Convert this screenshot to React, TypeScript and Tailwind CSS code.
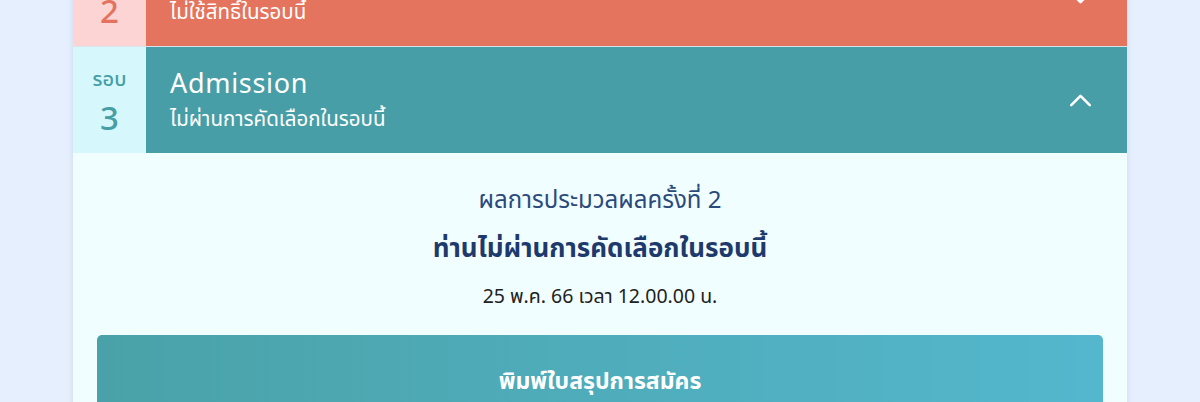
import { ChevronDown, ChevronUp } from 'lucide-react'

const font = { fontFamily: '"Noto Sans Thai", "Noto Sans", "Noto Sans CJK SC", sans-serif' }

type Round = {
  no: number
  title: string
  status: string
  open: boolean
  cell: string
  num: string
  head: string
}

const rounds: Round[] = [
  { no: 2, title: 'Quota', status: 'ไม่ใช้สิทธิ์ในรอบนี้', open: false, cell: 'bg-[#fbd4d3]', num: 'text-[#e3735d]', head: 'bg-[#e4745d]' },
  { no: 3, title: 'Admission', status: 'ไม่ผ่านการคัดเลือกในรอบนี้', open: true, cell: 'bg-[#d6f8fc]', num: 'text-[#479ea5]', head: 'bg-[#489ea6]' },
]

function RoundHeader({ r }: { r: Round }) {
  return (
    <div className={`flex ${r.open ? 'h-[106px]' : 'h-[107px] border-b border-[#d9e4ea]'}`}>
      <div className={`w-[73px] shrink-0 flex flex-col items-center pt-[20px] ${r.cell} ${r.num}`}>
        <span className="text-[20px] leading-[26px] font-medium">รอบ</span>
        <span className="mt-[6px] text-[33px] leading-[42px] font-medium">{r.no}</span>
      </div>
      <div className={`flex-1 flex items-center justify-between pl-6 pr-7 text-white ${r.head}`}>
        <div className="flex flex-col pt-1">
          <span className="text-[27px] leading-[36px] tracking-wide">{r.title}</span>
          <span className="text-[20.5px] leading-[34px]">{r.status}</span>
        </div>
        {r.open ? (
          <ChevronUp size={37} strokeWidth={1.7} />
        ) : (
          <ChevronDown size={37} strokeWidth={1.7} className="mt-[8px]" />
        )}
      </div>
    </div>
  )
}

export default function App() {
  return (
    <div className="min-h-screen bg-[#e6effd] overflow-hidden" style={font}>
      <div className="w-[1054px] mx-auto -mt-[60px] bg-[#f1feff] shadow-[0_0_6px_rgba(80,110,160,0.18)]">
        {rounds.map(r => (
          <RoundHeader key={r.no} r={r} />
        ))}
        <div className="px-6 pt-[24px] pb-10 flex flex-col items-center">
          <p className="text-[24px] leading-[48px] text-[#2b4a7c]">ผลการประมวลผลครั้งที่ 2</p>
          <p className="text-[26px] leading-[48px] font-bold text-[#1e3a6c]">ท่านไม่ผ่านการคัดเลือกในรอบนี้</p>
          <p className="text-[19.5px] leading-[48px] text-[#222]">25 พ.ค. 66 เวลา 12.00.00 น.</p>
          <button className="mt-[14px] w-full h-[96px] rounded-[5px] bg-gradient-to-r from-[#4aa2a8] to-[#54b7cd] text-white text-[23px] font-bold pt-[30px] flex justify-center items-start">
            พิมพ์ใบสรุปการสมัคร
          </button>
        </div>
      </div>
    </div>
  )
}
